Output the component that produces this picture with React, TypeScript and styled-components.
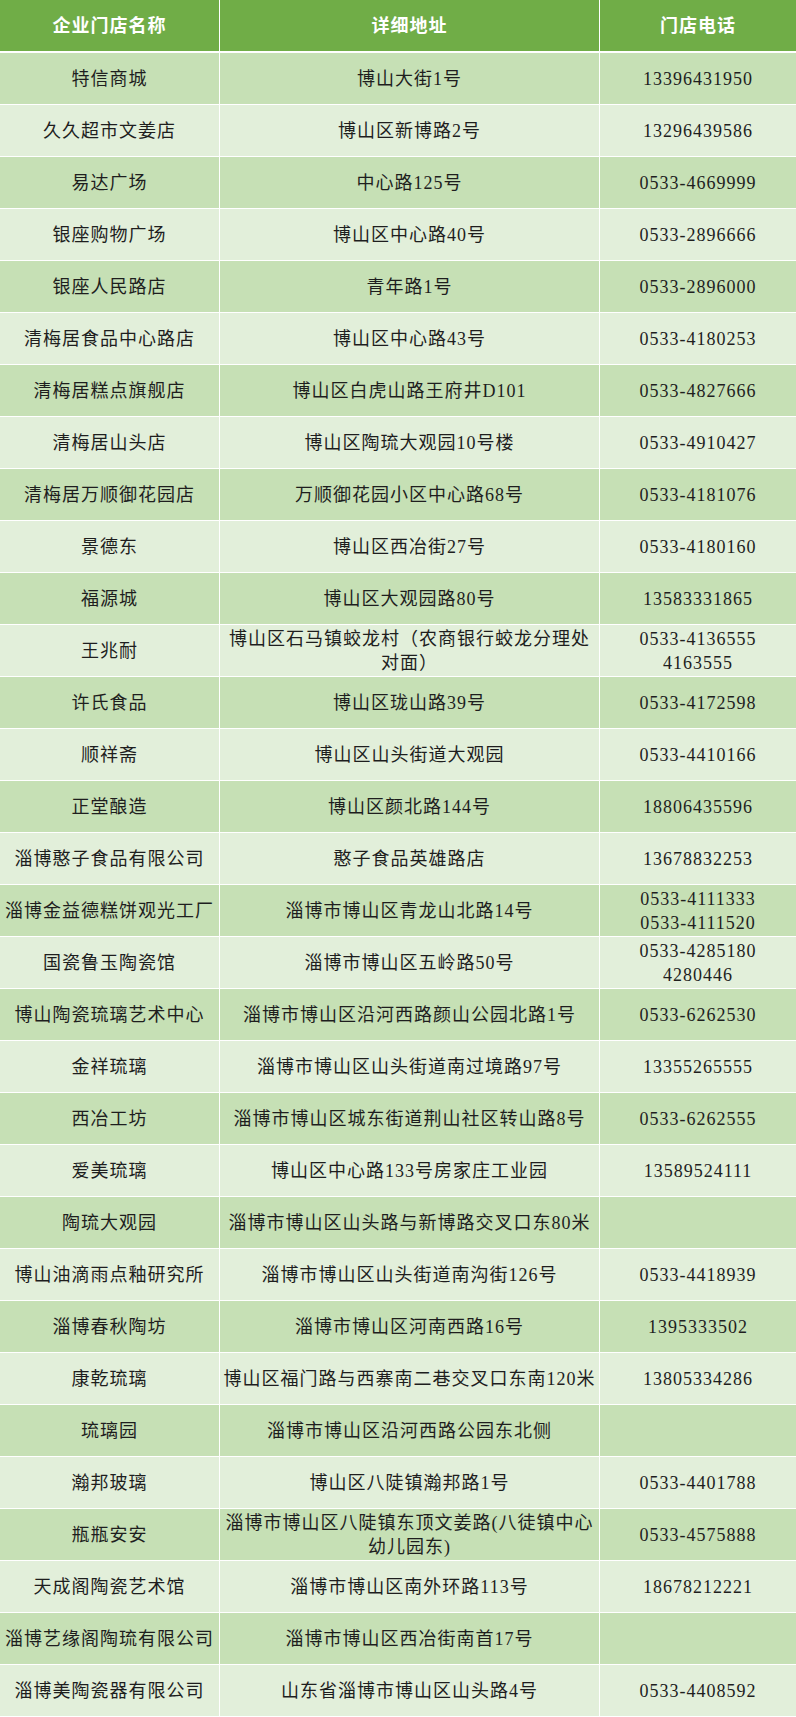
import React from 'react';
import styled, { createGlobalStyle } from 'styled-components';

const GlobalStyle = createGlobalStyle`
  html, body {
    margin: 0;
    padding: 0;
    background: #ffffff;
  }
`;

const Table = styled.div`
  width: 796px;
  display: flex;
  flex-direction: column;
  font-family: "Liberation Serif", "Noto Sans CJK SC", serif;
  font-size: 18px;
  letter-spacing: 1px;
  color: #1e1e1e;
`;

const Row = styled.div<{ $header?: boolean }>`
  display: grid;
  grid-template-columns: 219px 379px 1fr;
  column-gap: 1px;
  height: 51px;
  margin-bottom: ${(p) => (p.$header ? '2px' : '1px')};
`;

const Cell = styled.div<{ $tone: 'head' | 'odd' | 'even' }>`
  display: flex;
  align-items: center;
  justify-content: center;
  text-align: center;
  white-space: nowrap;
  line-height: 24px;
  background: ${(p) => (p.$tone === 'head' ? '#70ad47' : p.$tone === 'odd' ? '#c6e0b5' : '#e2efda')};
  color: ${(p) => (p.$tone === 'head' ? '#ffffff' : '#1e1e1e')};
  font-weight: ${(p) => (p.$tone === 'head' ? 700 : 400)};
`;

interface Store {
  name: string;
  address: string[];
  phone: string[];
}

const stores: Store[] = [
  { name: '特信商城', address: ['博山大街1号'], phone: ['13396431950'] },
  { name: '久久超市文姜店', address: ['博山区新博路2号'], phone: ['13296439586'] },
  { name: '易达广场', address: ['中心路125号'], phone: ['0533-4669999'] },
  { name: '银座购物广场', address: ['博山区中心路40号'], phone: ['0533-2896666'] },
  { name: '银座人民路店', address: ['青年路1号'], phone: ['0533-2896000'] },
  { name: '清梅居食品中心路店', address: ['博山区中心路43号'], phone: ['0533-4180253'] },
  { name: '清梅居糕点旗舰店', address: ['博山区白虎山路王府井D101'], phone: ['0533-4827666'] },
  { name: '清梅居山头店', address: ['博山区陶琉大观园10号楼'], phone: ['0533-4910427'] },
  { name: '清梅居万顺御花园店', address: ['万顺御花园小区中心路68号'], phone: ['0533-4181076'] },
  { name: '景德东', address: ['博山区西冶街27号'], phone: ['0533-4180160'] },
  { name: '福源城', address: ['博山区大观园路80号'], phone: ['13583331865'] },
  { name: '王兆耐', address: ['博山区石马镇蛟龙村（农商银行蛟龙分理处', '对面）'], phone: ['0533-4136555', '4163555'] },
  { name: '许氏食品', address: ['博山区珑山路39号'], phone: ['0533-4172598'] },
  { name: '顺祥斋', address: ['博山区山头街道大观园'], phone: ['0533-4410166'] },
  { name: '正堂酿造', address: ['博山区颜北路144号'], phone: ['18806435596'] },
  { name: '淄博憨子食品有限公司', address: ['憨子食品英雄路店'], phone: ['13678832253'] },
  { name: '淄博金益德糕饼观光工厂', address: ['淄博市博山区青龙山北路14号'], phone: ['0533-4111333', '0533-4111520'] },
  { name: '国瓷鲁玉陶瓷馆', address: ['淄博市博山区五岭路50号'], phone: ['0533-4285180', '4280446'] },
  { name: '博山陶瓷琉璃艺术中心', address: ['淄博市博山区沿河西路颜山公园北路1号'], phone: ['0533-6262530'] },
  { name: '金祥琉璃', address: ['淄博市博山区山头街道南过境路97号'], phone: ['13355265555'] },
  { name: '西冶工坊', address: ['淄博市博山区城东街道荆山社区转山路8号'], phone: ['0533-6262555'] },
  { name: '爱美琉璃', address: ['博山区中心路133号房家庄工业园'], phone: ['13589524111'] },
  { name: '陶琉大观园', address: ['淄博市博山区山头路与新博路交叉口东80米'], phone: [] },
  { name: '博山油滴雨点釉研究所', address: ['淄博市博山区山头街道南沟街126号'], phone: ['0533-4418939'] },
  { name: '淄博春秋陶坊', address: ['淄博市博山区河南西路16号'], phone: ['1395333502'] },
  { name: '康乾琉璃', address: ['博山区福门路与西寨南二巷交叉口东南120米'], phone: ['13805334286'] },
  { name: '琉璃园', address: ['淄博市博山区沿河西路公园东北侧'], phone: [] },
  { name: '瀚邦玻璃', address: ['博山区八陡镇瀚邦路1号'], phone: ['0533-4401788'] },
  { name: '瓶瓶安安', address: ['淄博市博山区八陡镇东顶文姜路(八徒镇中心', '幼儿园东)'], phone: ['0533-4575888'] },
  { name: '天成阁陶瓷艺术馆', address: ['淄博市博山区南外环路113号'], phone: ['18678212221'] },
  { name: '淄博艺缘阁陶琉有限公司', address: ['淄博市博山区西冶街南首17号'], phone: [] },
  { name: '淄博美陶瓷器有限公司', address: ['山东省淄博市博山区山头路4号'], phone: ['0533-4408592'] },
];

const Lines: React.FC<{ lines: string[] }> = ({ lines }) => (
  <span>
    {lines.map((line, i) => (
      <React.Fragment key={i}>
        {i > 0 && <br />}
        {line}
      </React.Fragment>
    ))}
  </span>
);

const App: React.FC = () => {
  return (
    <>
      <GlobalStyle />
      <Table>
        <Row $header>
          <Cell $tone="head">企业门店名称</Cell>
          <Cell $tone="head">详细地址</Cell>
          <Cell $tone="head">门店电话</Cell>
        </Row>
        {stores.map((store, index) => {
          const tone = index % 2 === 0 ? 'odd' : 'even';
          return (
            <Row key={store.name}>
              <Cell $tone={tone}>{store.name}</Cell>
              <Cell $tone={tone}>
                <Lines lines={store.address} />
              </Cell>
              <Cell $tone={tone}>
                <Lines lines={store.phone} />
              </Cell>
            </Row>
          );
        })}
      </Table>
    </>
  );
};

export default App;
